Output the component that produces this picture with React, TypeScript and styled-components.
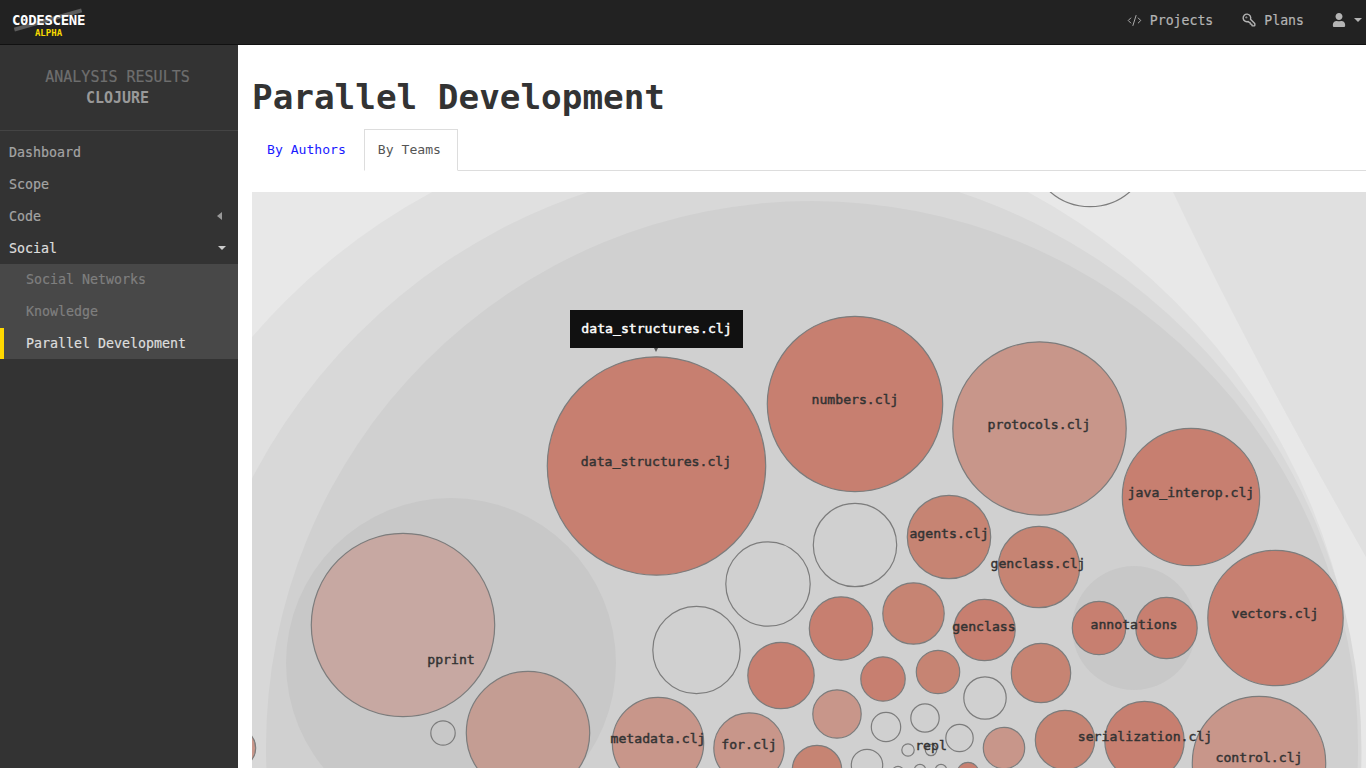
import * as React from 'react'
import styled, { createGlobalStyle } from 'styled-components'
import { FaUser } from 'react-icons/fa'
import { LuCodeXml, LuKeyRound } from 'react-icons/lu'

const mono = `"DejaVu Sans Mono", "Liberation Mono", monospace`

const GlobalStyle = createGlobalStyle`
  html, body {
    margin: 0;
    padding: 0;
    height: 100%;
    overflow: hidden;
    background: #fff;
    font-family: ${mono};
  }
`

const Page = styled.div`
  display: flex;
  flex-direction: column;
  width: 100%;
  height: 768px;
  overflow: hidden;
`

const TopBar = styled.header`
  flex: 0 0 45px;
  box-sizing: border-box;
  display: flex;
  align-items: center;
  justify-content: space-between;
  background: #222;
  border-bottom: 1px solid #111;
  padding: 0 4px 4px 12px;
`

const Logo = styled.div`
  position: relative;
  align-self: flex-start;
  display: flex;
  flex-direction: column;
  align-items: center;
  width: 73px;
  margin-top: 12px;
`

const LogoBar = styled.span`
  position: absolute;
  left: 1px;
  top: 6px;
  width: 70px;
  height: 4px;
  background: #5c5c5c;
  transform: rotate(-16deg);
`

const LogoName = styled.span`
  position: relative;
  color: #fff;
  font-size: 14px;
  font-weight: 700;
  line-height: 16px;
  letter-spacing: -0.3px;
`

const LogoTag = styled.span`
  position: relative;
  color: #f7d900;
  font-size: 9px;
  font-weight: 700;
  line-height: 9px;
  margin-top: 1px;
`

const TopNav = styled.nav`
  display: flex;
  align-items: center;
  gap: 29px;
`

const TopLink = styled.a`
  display: flex;
  align-items: center;
  gap: 8px;
  color: #b4b4b4;
  font-size: 13.2px;
  -webkit-text-stroke: 0.2px #b4b4b4;
  text-decoration: none;
  svg { display: block; }
`

const UserMenu = styled(TopLink)`
  margin-left: -1px;
`

const CaretDown = styled.span<{ $color: string }>`
  display: block;
  width: 0;
  height: 0;
  border-left: 4px solid transparent;
  border-right: 4px solid transparent;
  border-top: 4px solid ${(p) => p.$color};
`

const CaretLeft = styled.span`
  display: block;
  width: 0;
  height: 0;
  margin-right: 4px;
  border-top: 4px solid transparent;
  border-bottom: 4px solid transparent;
  border-right: 5px solid #999;
`

const Body = styled.div`
  flex: 1;
  display: flex;
  min-height: 0;
`

const Sidebar = styled.aside`
  flex: 0 0 238px;
  background: #333;
`

const SideHead = styled.div`
  height: 86px;
  box-sizing: border-box;
  padding: 22px 3px 0 0;
  text-align: center;
  border-bottom: 1px solid #444;
  font-size: 15px;
  line-height: 21px;
`

const SideTitle = styled.div`
  color: #6e6e6e;
  -webkit-text-stroke: 0.2px #6e6e6e;
`

const SideProject = styled.div`
  color: #999;
  font-weight: 700;
`

const SideNav = styled.nav`
  padding-top: 6px;
`

const NavRow = styled.a<{ $active?: boolean }>`
  display: flex;
  align-items: center;
  justify-content: space-between;
  height: 31.75px;
  padding: 0 12px 0 9px;
  color: ${(p) => (p.$active ? '#ddd' : '#a4a4a4')};
  -webkit-text-stroke: 0.2px ${(p) => (p.$active ? '#ddd' : '#a4a4a4')};
  font-size: 13.3px;
`

const SubNav = styled.div`
  background: #484848;
`

const SubRow = styled.a<{ $current?: boolean }>`
  display: flex;
  align-items: center;
  height: 31.75px;
  box-sizing: border-box;
  padding-left: ${(p) => (p.$current ? '22px' : '26px')};
  border-left: ${(p) => (p.$current ? '4px solid #ffd800' : 'none')};
  color: ${(p) => (p.$current ? '#ddd' : '#7f7f7f')};
  -webkit-text-stroke: 0.2px ${(p) => (p.$current ? '#ddd' : '#7f7f7f')};
  font-size: 13.3px;
`

const Main = styled.main`
  flex: 1;
  min-width: 0;
  display: flex;
  flex-direction: column;
  padding-left: 14px;
`

const Title = styled.h1`
  margin: 30px 0 10px;
  color: #333;
  font-size: 34.3px;
  line-height: 44px;
  font-weight: 700;
`

const Tabs = styled.div`
  display: flex;
  height: 42px;
  box-sizing: border-box;
  border-bottom: 1px solid #ddd;
`

const Tab = styled.a<{ $active?: boolean }>`
  box-sizing: border-box;
  height: 42px;
  padding: ${(p) => (p.$active ? '0 16px 2px 13px' : '0 17px 2px 14px')};
  display: flex;
  align-items: center;
  font-size: 13.1px;
  color: ${(p) => (p.$active ? '#555' : '#1a1aff')};
  background: #fff;
  border: 1px solid ${(p) => (p.$active ? '#ddd' : 'transparent')};
  border-bottom: 1px solid ${(p) => (p.$active ? '#fff' : 'transparent')};
`

const Chart = styled.div`
  position: relative;
  flex: 1;
  margin-top: 21px;
  min-height: 0;
  overflow: hidden;
`

const ChartSvg = styled.svg`
  display: block;
  width: 100%;
  height: 100%;
`

const Label = styled.text`
  font-family: ${mono};
  font-size: 13.15px;
  font-weight: 400;
  fill: #333;
  stroke: #333;
  stroke-width: 0.45px;
  text-anchor: middle;
`

const Tooltip = styled.div`
  position: absolute;
  left: 318px;
  top: 118px;
  width: 173px;
  height: 38px;
  padding-bottom: 2px;
  box-sizing: border-box;
  display: flex;
  align-items: center;
  justify-content: center;
  background: #111;
  color: #fff;
  font-size: 13.15px;
  -webkit-text-stroke: 0.45px #fff;
  &::after {
    content: '';
    position: absolute;
    left: 84px;
    top: 38px;
    border-left: 2px solid transparent;
    border-right: 2px solid transparent;
    border-top: 4px solid #555;
  }
`

type Bubble = [number, number, number, string?]

const HOT = '#c77f70'
const WARM = '#c68473'
const PALE = '#c8968a'

const groups: Bubble[] = [
  [451, 663, 165, '#c8c8c8'],
  [1134, 628, 62, '#c8c8c8'],
]

const bubbles: Bubble[] = [
  [1090, 146, 61],
  [656.5, 466, 109.5, HOT],
  [855, 404, 88, HOT],
  [1039.5, 428.5, 87, PALE],
  [1191, 497, 69, HOT],
  [949, 537, 42, WARM],
  [1039, 567, 41, WARM],
  [855, 545, 42],
  [768, 584, 42.5],
  [696.5, 650, 44],
  [1275.5, 618, 68, HOT],
  [1099, 628, 27, HOT],
  [1166.5, 628, 31, HOT],
  [841, 628.5, 32, HOT],
  [913.5, 613.5, 31, WARM],
  [984.5, 630, 31, HOT],
  [781, 675.5, 33.5, HOT],
  [883, 679, 22.5, HOT],
  [938, 672, 22, WARM],
  [985, 698, 21.5],
  [1041, 673, 30, WARM],
  [837, 714, 24.5, PALE],
  [886, 727, 15],
  [925, 718, 14.5],
  [959.5, 738, 14],
  [1004, 748, 21, PALE],
  [908, 750, 6.5],
  [931, 750, 6],
  [658, 743, 46, PALE],
  [749, 748, 35.5, PALE],
  [817, 770, 25, WARM],
  [867, 765, 16],
  [898, 772, 6],
  [920, 770, 6],
  [941, 770, 6],
  [968, 773, 11, HOT],
  [1065, 740, 30, WARM],
  [1144.5, 741, 40, HOT],
  [1259, 763, 67, PALE],
  [403, 625, 92, '#c7a8a2'],
  [528, 733, 62, '#c49d93'],
  [443, 733, 12.5],
  [236, 748, 20, PALE],
]

const labels: [string, number, number][] = [
  ['data_structures.clj', 656, 462],
  ['numbers.clj', 855, 400],
  ['protocols.clj', 1039, 425],
  ['java_interop.clj', 1191, 493],
  ['agents.clj', 949, 534],
  ['genclass.clj', 1038, 564],
  ['genclass', 984, 627],
  ['annotations', 1134, 625],
  ['vectors.clj', 1275, 614],
  ['pprint', 451, 660],
  ['metadata.clj', 658, 739],
  ['for.clj', 749, 745],
  ['repl', 931, 746],
  ['serialization.clj', 1145, 737],
  ['control.clj', 1259, 758],
]

const App = () => (
  <Page>
    <GlobalStyle />
    <TopBar>
      <Logo>
        <LogoBar />
        <LogoName>C0DESCENE</LogoName>
        <LogoTag>ALPHA</LogoTag>
      </Logo>
      <TopNav>
        <TopLink>
          <LuCodeXml size={15} strokeWidth={1.5} />
          Projects
        </TopLink>
        <TopLink>
          <LuKeyRound size={14} strokeWidth={2.4} style={{ transform: 'scaleX(-1)' }} />
          Plans
        </TopLink>
        <UserMenu>
          <FaUser size={14} />
          <CaretDown $color="#b4b4b4" />
        </UserMenu>
      </TopNav>
    </TopBar>
    <Body>
      <Sidebar>
        <SideHead>
          <SideTitle>ANALYSIS RESULTS</SideTitle>
          <SideProject>CLOJURE</SideProject>
        </SideHead>
        <SideNav>
          <NavRow>Dashboard</NavRow>
          <NavRow>Scope</NavRow>
          <NavRow>
            Code
            <CaretLeft />
          </NavRow>
          <NavRow $active>
            Social
            <CaretDown $color="#ccc" />
          </NavRow>
          <SubNav>
            <SubRow>Social Networks</SubRow>
            <SubRow>Knowledge</SubRow>
            <SubRow $current>Parallel Development</SubRow>
          </SubNav>
        </SideNav>
      </Sidebar>
      <Main>
        <Title>Parallel Development</Title>
        <Tabs>
          <Tab>By Authors</Tab>
          <Tab $active>By Teams</Tab>
        </Tabs>
        <Chart>
          <ChartSvg viewBox="252 192 1114 576" preserveAspectRatio="xMinYMin slice">
            <rect x="252" y="192" width="1114" height="576" fill="#e8e8e8" />
            <path d="M1173 192 Q1245 345 1366 557 L1366 192 Z" fill="#e0e0e0" />
            <circle cx="730" cy="746" r="629" fill="#e0e0e0" />
            <circle cx="773.5" cy="750" r="588" fill="#d8d8d8" />
            <circle cx="812" cy="747" r="546" fill="#d0d0d0" />
            {groups.map(([cx, cy, r, fill]) => (
              <circle key={`${cx}-${cy}`} cx={cx} cy={cy} r={r} fill={fill} />
            ))}
            {bubbles.map(([cx, cy, r, fill]) => (
              <circle
                key={`${cx}-${cy}`}
                cx={cx}
                cy={cy}
                r={r - 0.3}
                fill={fill ?? 'none'}
                stroke="#7c7c7c"
                strokeWidth="1.2"
              />
            ))}
            {labels.map(([name, x, y]) => (
              <Label key={name} x={x} y={y} dy="0.3em">
                {name}
              </Label>
            ))}
          </ChartSvg>
          <Tooltip>data_structures.clj</Tooltip>
        </Chart>
      </Main>
    </Body>
  </Page>
)

export default App
